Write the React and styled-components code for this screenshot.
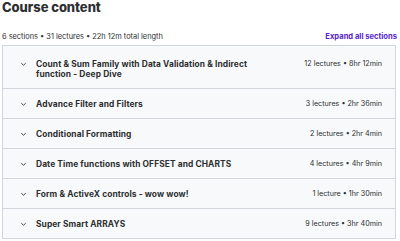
import React from "react"
import styled, { createGlobalStyle } from "styled-components"

const GlobalStyle = createGlobalStyle`
  body {
    margin: 0;
    background: #fff;
    font-family: "Inter", "Liberation Sans", Arial, sans-serif;
    color: #2d2f31;
  }
`

const Page = styled.div`
  padding: 0 4px 0 2px;
`

const Title = styled.h2`
  margin: 0;
  font-size: 13px;
  font-weight: 800;
  line-height: 14px;
  letter-spacing: -0.05px;
`

const Summary = styled.div`
  display: flex;
  justify-content: space-between;
  align-items: center;
  margin: 15px 0 2px;
  height: 14px;
  font-size: 7.4px;
`

const Expand = styled.button`
  border: 0;
  background: none;
  padding: 0;
  margin-right: -1px;
  font: inherit;
  font-size: 7.6px;
  font-weight: 700;
  color: #5624d0;
  cursor: pointer;
`

const Sections = styled.div`
  border: 1px solid #d1d7dc;
  border-bottom: 0;
`

const Row = styled.div`
  display: flex;
  align-items: flex-start;
  gap: 9px;
  box-sizing: border-box;
  height: ${(p) => (p.tall ? "43px" : "30px")};
  padding: ${(p) => (p.tall ? "13px" : "10px")} 13px 0 17px;
  background: #f7f9fa;
  border-bottom: 1px solid #d1d7dc;
`

const Chevron = styled.svg`
  flex: none;
  width: 7px;
  height: 10px;
`

const SectionTitle = styled.div`
  flex: 1;
  max-width: ${(p) => (p.narrow ? "222px" : "none")};
  font-size: 8.4px;
  font-weight: 700;
  line-height: 10px;
  letter-spacing: 0.1px;
`

const Meta = styled.div`
  flex: none;
  margin-left: auto;
  font-size: 7.2px;
  line-height: 10px;
  color: #2d2f31;
`

const sections = [
  {
    title: "Count & Sum Family with Data Validation & Indirect function - Deep Dive",
    meta: "12 lectures • 8hr 12min",
  },
  { title: "Advance Filter and Filters", meta: "3 lectures • 2hr 36min" },
  { title: "Conditional Formatting", meta: "2 lectures • 2hr 4min" },
  { title: "Date Time functions with OFFSET and CHARTS", meta: "4 lectures • 4hr 9min" },
  { title: "Form & ActiveX controls - wow wow!", meta: "1 lecture • 1hr 30min" },
  { title: "Super Smart ARRAYS", meta: "9 lectures • 3hr 40min" },
]

const App = () => (
  <Page>
    <GlobalStyle />
    <Title>Course content</Title>
    <Summary>
      <span>6 sections • 31 lectures • 22h 12m total length</span>
      <Expand>Expand all sections</Expand>
    </Summary>
    <Sections>
      {sections.map((s, i) => (
        <Row key={s.title} tall={i === 0}>
          <Chevron viewBox="0 0 7 10">
            <path d="M1.3 4.2 L3.5 6.2 L5.7 4.2" fill="none" stroke="#3e4143" strokeWidth="1" />
          </Chevron>
          <SectionTitle narrow={i === 0}>{s.title}</SectionTitle>
          <Meta>{s.meta}</Meta>
        </Row>
      ))}
    </Sections>
  </Page>
)

export default App
